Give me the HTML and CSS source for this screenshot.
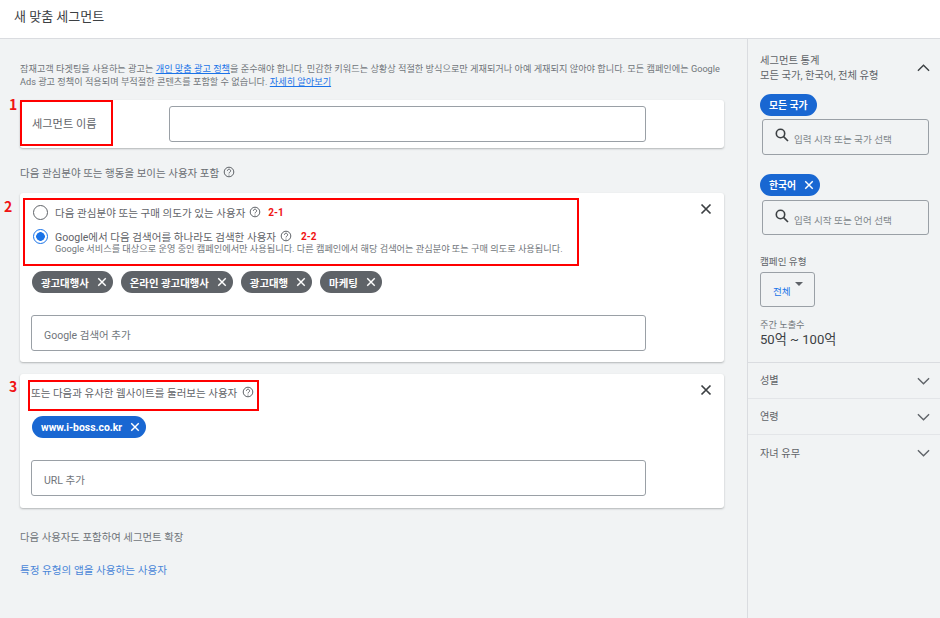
FILE: index.html
```html
<!DOCTYPE html>
<html lang="ko">
<head>
<meta charset="utf-8">
<title>새 맞춤 세그먼트</title>
<link rel="stylesheet" href="styles.css">
</head>
<body>
<div class="page">
  <header class="topbar">새 맞춤 세그먼트</header>
  <div class="body">
    <main class="main">
      <p class="notice">잠재고객 타겟팅을 사용하는 광고는 <a href="#">개인 맞춤 광고 정책</a>을 준수해야 합니다. 민감한 키워드는 상황상 적절한 방식으로만 게재되거나 아예 게재되지 않아야 합니다. 모든 캠페인에는 Google Ads 광고 정책이 적용되며 부적절한 콘텐츠를 포함할 수 없습니다. <a href="#">자세히 알아보기</a></p>

      <section class="card card-name">
        <div class="name-label">세그먼트 이름</div>
        <div class="field field-name"></div>
      </section>

      <div class="section-label">다음 관심분야 또는 행동을 보이는 사용자 포함
        <svg class="help" viewBox="0 0 12 12"><use href="#i-help"/></svg>
      </div>

      <section class="card card-search">
        <svg class="close" viewBox="0 0 12 12"><use href="#i-x"/></svg>
        <div class="radio-row">
          <span class="radio"></span>
          <span class="radio-text">다음 관심분야 또는 구매 의도가 있는 사용자</span>
          <svg class="help" viewBox="0 0 12 12"><use href="#i-help"/></svg>
          <span class="mark mark-a">2-1</span>
        </div>
        <div class="radio-row radio-row-two">
          <span class="radio radio-on"></span>
          <span class="radio-text">Google에서 다음 검색어를 하나라도 검색한 사용자</span>
          <svg class="help" viewBox="0 0 12 12"><use href="#i-help"/></svg>
          <span class="mark mark-b">2-2</span>
        </div>
        <div class="radio-sub">Google 서비스를 대상으로 운영 중인 캠페인에서만 사용됩니다. 다른 캠페인에서 해당 검색어는 관심분야 또는 구매 의도로 사용됩니다.</div>
        <div class="chips">
          <span class="chip chip-grey">광고대행사<svg viewBox="0 0 12 12"><use href="#i-x"/></svg></span>
          <span class="chip chip-grey">온라인 광고대행사<svg viewBox="0 0 12 12"><use href="#i-x"/></svg></span>
          <span class="chip chip-grey">광고대행<svg viewBox="0 0 12 12"><use href="#i-x"/></svg></span>
          <span class="chip chip-grey">마케팅<svg viewBox="0 0 12 12"><use href="#i-x"/></svg></span>
        </div>
        <div class="field field-wide">Google 검색어 추가</div>
      </section>

      <section class="card card-url">
        <svg class="close" viewBox="0 0 12 12"><use href="#i-x"/></svg>
        <div class="url-label">또는 다음과 유사한 웹사이트를 둘러보는 사용자
          <svg class="help" viewBox="0 0 12 12"><use href="#i-help"/></svg>
        </div>
        <div class="chips chips-url">
          <span class="chip chip-blue">www.i-boss.co.kr<svg viewBox="0 0 12 12"><use href="#i-x"/></svg></span>
        </div>
        <div class="field field-wide">URL 추가</div>
      </section>

      <div class="expand">다음 사용자도 포함하여 세그먼트 확장</div>
      <a class="app-link" href="#">특정 유형의 앱을 사용하는 사용자</a>
    </main>

    <aside class="side">
      <div class="stats">
        <div class="stats-head">
          <div>
            <div class="stats-title">세그먼트 통계</div>
            <div class="stats-sub">모든 국가, 한국어, 전체 유형</div>
          </div>
          <svg class="chev chev-up" viewBox="0 0 14 8"><path d="M1 7l6-6 6 6"/></svg>
        </div>
        <span class="chip chip-blue chip-side">모든 국가</span>
        <div class="search-box">
          <svg viewBox="0 0 14 14"><circle cx="5.5" cy="5.5" r="4.2"/><path d="M8.6 8.6l4.4 4.4"/></svg><span class="search-text">입력 시작 또는 국가 선택</span>
        </div>
        <span class="chip chip-blue chip-side chip-lang">한국어<svg viewBox="0 0 12 12"><use href="#i-x"/></svg></span>
        <div class="search-box">
          <svg viewBox="0 0 14 14"><circle cx="5.5" cy="5.5" r="4.2"/><path d="M8.6 8.6l4.4 4.4"/></svg><span class="search-text">입력 시작 또는 언어 선택</span>
        </div>
        <div class="type-label">캠페인 유형</div>
        <div class="dropdown"><span>전체</span><i class="caret"></i></div>
        <div class="reach-label">주간 노출수</div>
        <div class="reach-value">50억 ~ 100억</div>
      </div>
      <div class="acc">성별<svg class="chev" viewBox="0 0 14 8"><path d="M1 1l6 6 6-6"/></svg></div>
      <div class="acc">연령<svg class="chev" viewBox="0 0 14 8"><path d="M1 1l6 6 6-6"/></svg></div>
      <div class="acc">자녀 유무<svg class="chev" viewBox="0 0 14 8"><path d="M1 1l6 6 6-6"/></svg></div>
    </aside>
  </div>

  <div class="box box-1"></div>
  <div class="box box-2"></div>
  <div class="box box-3"></div>
  <span class="num num-1">1</span>
  <span class="num num-2">2</span>
  <span class="num num-3">3</span>

  <svg class="defs" width="0" height="0">
    <defs>
      <g id="i-x"><path d="M1.5 1.5l9 9M10.5 1.5l-9 9" fill="none" stroke="currentColor" stroke-width="1.7"/></g>
      <g id="i-help">
        <circle cx="6" cy="6" r="4.8" fill="none" stroke="currentColor" stroke-width="1"/>
        <path d="M4.4 4.8a1.6 1.6 0 1 1 2.5 1.3c-.6.4-.9.7-.9 1.3" fill="none" stroke="currentColor" stroke-width="1"/>
        <circle cx="6" cy="9" r=".6" fill="currentColor"/>
      </g>
    </defs>
  </svg>
</div>
</body>
</html>
```
FILE: styles.css
```css
* { box-sizing: border-box; }
html, body { margin: 0; padding: 0; }
body {
  font-family: Roboto, "Noto Sans CJK KR", sans-serif;
  color: #5f6368;
  background: #f1f3f4;
}
a { color: #1a73e8; }

.page {
  position: relative;
  width: 940px;
  height: 618px;
  overflow: hidden;
  background: #f1f3f4;
}
.topbar {
  height: 39px;
  background: #fff;
  border-bottom: 1px solid #dadce0;
  padding: 7px 0 0 14px;
  font-size: 13px;
  line-height: 20px;
  color: #3c4043;
}
.body { display: flex; height: 579px; }

.main { width: 747px; padding: 23px 23px 0 20px; flex: none; }
.notice {
  margin: 0 0 11px;
  font-size: 9.18px;
  line-height: 13px;
  height: 27px;
  color: #70757a;
  width: 704px;
}
.notice a { display: inline-block; line-height: 13px; height: 13px; }

.card {
  position: relative;
  width: 704px;
  background: #fff;
  border-radius: 3px;
  box-shadow: 0 1px 2px rgba(60,64,67,.35);
}
.card-name {
  display: flex;
  align-items: center;
  height: 48px;
  padding-left: 12px;
}
.name-label { width: 137px; font-size: 11.2px; line-height: 14px; margin-top: 2px; color: #5f6368; }
.field {
  border: 1px solid #9aa0a6;
  border-radius: 3px;
  background: #fff;
  font-size: 10.5px;
  color: #70757a;
}
.field-name { width: 477px; height: 36px; }
.field-wide {
  width: 615px;
  height: 36px;
  margin-left: 11px;
  padding: 0 12px;
  line-height: 39px;
}

.section-label {
  display: flex;
  align-items: center;
  gap: 4px;
  height: 16px;
  margin: 16px 0 13px;
  font-size: 10.5px;
  color: #6a6e73;
}
.help { width: 12px; height: 12px; flex: none; color: #5f6368; }

.card-search { height: 169px; padding-top: 11px; }
.close {
  position: absolute;
  right: 12px;
  top: 10px;
  width: 12px;
  height: 12px;
  color: #3c4043;
}
.radio-row {
  display: flex;
  align-items: center;
  height: 16px;
  padding-left: 13px;
  font-size: 10.55px;
  color: #5f6368;
}
.radio-row-two { margin-top: 8px; }
.radio {
  width: 15px;
  height: 15px;
  border: 1.6px solid #5f6368;
  border-radius: 50%;
  flex: none;
  margin-right: 7px;
  background: #fff;
}
.radio-on {
  border-color: #1a73e8;
  background: radial-gradient(circle, #1a73e8 0 4px, #fff 4.6px);
}
.radio-text { margin-right: 4px; }
.mark { color: #f01414; font-weight: 700; font-size: 10px; }
.mark-a { margin-left: 7px; }
.mark-b { margin-left: 9px; }
.radio-sub {
  padding-left: 35px;
  font-size: 9.2px;
  line-height: 12px;
  height: 12px;
  margin-top: -1px;
  color: #70757a;
  white-space: nowrap;
}

.chips { display: flex; gap: 8px; padding-left: 12px; margin: 16px 0 22px; }
.chips-url { margin: 16px 0 22px; }
.chip {
  display: inline-flex;
  align-items: center;
  height: 22px;
  border-radius: 11px;
  padding: 0 6px 0 9px;
  font-size: 10.4px;
  font-weight: 700;
  color: #fff;
  white-space: nowrap;
}
.chip svg { width: 10px; height: 10px; margin-left: 8px; flex: none; }
.chip-grey { background: #5f6368; }
.chip-blue { background: #1967d2; }

.card-url { height: 134px; margin-top: 12px; padding-top: 10px; }
.url-label {
  display: flex;
  align-items: center;
  gap: 5px;
  height: 16px;
  padding-left: 11px;
  font-size: 10.5px;
  color: #5f6368;
}

.expand { margin-top: 22px; font-size: 10.4px; line-height: 16px; color: #70757a; }
.app-link {
  display: block;
  margin-top: 17px;
  font-size: 10.6px;
  line-height: 16px;
  color: #4a86d8;
  text-decoration: none;
}

.side { flex: 1; border-left: 1px solid #dadce0; }
.stats {
  height: 324px;
  padding: 14px 0 0 12px;
  border-bottom: 1px solid #dadce0;
}
.stats-head { display: flex; justify-content: space-between; align-items: center; padding-right: 10px; height: 30px; }
.stats-title, .stats-sub { font-size: 10.3px; line-height: 15px; color: #5f6368; }
.chev { width: 13px; height: 8px; fill: none; stroke: #5f6368; stroke-width: 1.5; flex: none; }
.chev-up { stroke: #3c4043; }

.chip-side { display: flex; width: fit-content; margin-top: 11px; padding: 0 9px; font-size: 9.8px; }
.chip-lang { margin-top: 19px; padding-right: 6px; }
.search-box {
  display: flex;
  align-items: center;
  width: 167px;
  height: 36px;
  margin: 3px 0 0 2px;
  padding-left: 12px;
  border: 1px solid #9aa0a6;
  border-radius: 3px;
  font-size: 9.6px;
  color: #80868b;
}
.chip-lang + .search-box { margin-top: 4px; height: 35px; }
.search-text { margin: 4px 0 0 -2px; }
.search-box svg {
  width: 14px;
  height: 14px;
  margin: -4px 7px 0 0;
  fill: none;
  stroke: #3c4043;
  stroke-width: 1.6;
  flex: none;
}
.type-label { margin-top: 20px; font-size: 9.6px; line-height: 14px; color: #5f6368; }
.dropdown {
  position: relative;
  width: 55px;
  height: 35px;
  margin-top: 3px;
  padding: 12px 0 0 12px;
  border: 1px solid #9aa0a6;
  border-radius: 3px;
  font-size: 9.6px;
  line-height: 14px;
  color: #1a73e8;
}
.caret {
  position: absolute;
  right: 11px;
  top: 9px;
  border-left: 4px solid transparent;
  border-right: 4px solid transparent;
  border-top: 4px solid #5f6368;
}
.reach-label { margin-top: 11px; font-size: 9.2px; line-height: 13px; color: #70757a; }
.reach-value { font-size: 13.1px; line-height: 18px; color: #3c4043; }

.acc {
  display: flex;
  justify-content: space-between;
  align-items: center;
  height: 36px;
  padding: 0 10px 2px 12px;
  font-size: 10.2px;
  color: #5f6368;
  border-bottom: 1px solid #e3e5e8;
}
.acc .chev { margin-top: 2px; }
.acc:last-child { border-bottom: 0; }

.box { position: absolute; border: 2px solid #f00; }
.box-1 { left: 20px; top: 100px; width: 93px; height: 46px; }
.box-2 { left: 23px; top: 198px; width: 556px; height: 68px; }
.box-3 { left: 28px; top: 380px; width: 231px; height: 31px; }
.num {
  position: absolute;
  color: #f01414;
  font-size: 14px;
  line-height: 16px;
  font-weight: 700;
  font-family: "Noto Sans CJK KR", sans-serif;
}
.num-1 { left: 9px; top: 96px; }
.num-2 { left: 4px; top: 198px; }
.num-3 { left: 9px; top: 378px; }
.defs { position: absolute; }
```
